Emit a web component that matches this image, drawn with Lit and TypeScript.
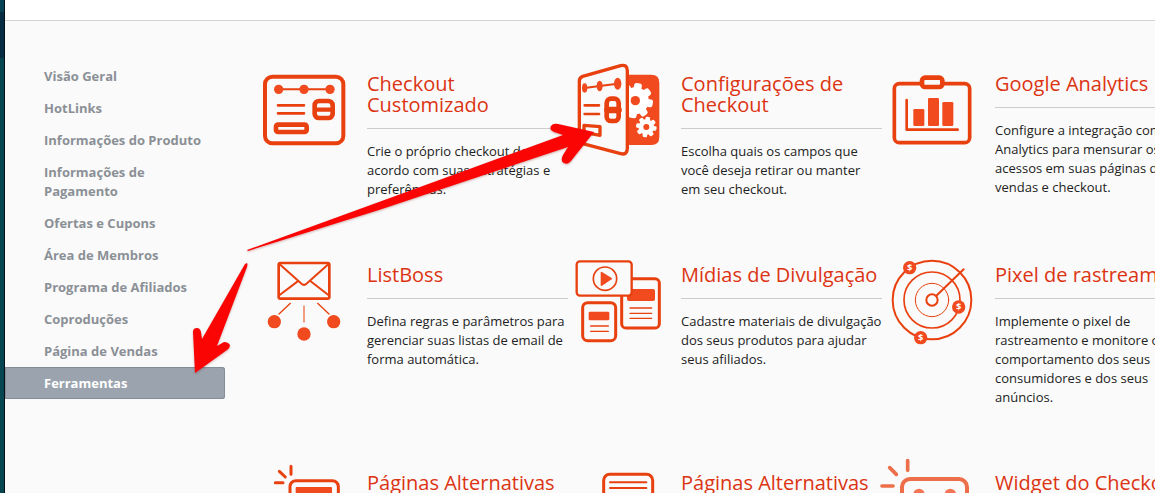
import { LitElement, html, css, svg } from "lit";
import { customElement, property } from "lit/decorators.js";

interface Tool {
  title: string;
  text: string;
  box: string;
  oneLine?: boolean;
  icon: unknown;
}

const gear = (cx: number, cy: number, r: number, hole: number) => svg`
  <g transform="translate(${cx} ${cy})">
    <circle r=${r * 0.76} fill="#fff"/>
    ${[0, 45, 90, 135, 180, 225, 270, 315].map(
      (a) => svg`<rect x=${-r * 0.22} y=${-r} width=${r * 0.44} height=${r * 0.6} rx=${r * 0.14} fill="#fff" transform="rotate(${a + 10})"/>`
    )}
    <circle r=${hole} fill="#f04a1e"/>
  </g>`;

const coin = (x: number, y: number) => svg`
  <circle cx=${x} cy=${y} r="20" fill="#f04a1e"/>
  <text class="coin" x=${x} y=${y + 10} text-anchor="middle">$</text>`;

const TOOLS: Tool[] = [
  {
    title: "Checkout Customizado",
    text: "Crie o próprio checkout de acordo com suas estratégias e preferências.",
    box: "12 0 300 300",
    icon: svg`
      <rect x="45" y="50" width="235" height="200" rx="22" stroke-width="12"/>
      <path d="M86 88H240" stroke-width="6"/>
      <g class="solid"><circle cx="86" cy="88" r="14"/><circle cx="162" cy="88" r="14"/><circle cx="240" cy="88" r="14"/></g>
      <path d="M84 136H162M84 160H162" stroke-width="8"/>
      <rect x="78" y="194" width="92" height="22" rx="6" stroke-width="14"/>
      <rect x="194" y="123" width="54" height="51" rx="13" stroke-width="14"/>
      <path d="M196 149H246" stroke-width="13"/>`,
  },
  {
    title: "Configurações de Checkout",
    text: "Escolha quais os campos que você deseja retirar ou manter em seu checkout.",
    box: "24 15 300 300",
    icon: svg`
      <path class="solid" d="M198 59H274Q298 59 298 83V246Q298 270 274 270H198Z"/>
      ${gear(226, 137, 53, 14)}
      ${gear(259, 216, 31, 9)}
      <path d="M58 78Q58 68 68 64L182 32Q202 27 202 48V280Q202 301 182 296L68 266Q58 263 58 252Z" fill="#fafafa" stroke-width="10"/>
      <path d="M74 99L119 93L173 86" stroke-width="6"/>
      <g class="solid"><ellipse cx="74" cy="99" rx="8" ry="14"/><ellipse cx="119" cy="93" rx="9" ry="16"/><ellipse cx="173" cy="86" rx="11" ry="18"/></g>
      <path d="M74 151H117M74 177H117" stroke-width="8"/>
      <rect x="140" y="131" width="36" height="67" rx="13" stroke-width="14"/>
      <path d="M142 165H176" stroke-width="19"/>
      <path d="M72 211L120 215V241L72 232Z" stroke-width="10"/>`,
  },
  {
    title: "Google Analytics",
    text: "Configure a integração com o Analytics para mensurar os acessos em suas páginas de vendas e checkout.",
    box: "6 0 300 300",
    icon: svg`
      <rect x="43" y="71" width="226" height="177" rx="15" stroke-width="11"/>
      <rect x="126" y="53" width="61" height="28" rx="9" fill="#fafafa" stroke-width="14"/>
      <path d="M80 120V209H233" stroke-width="8"/>
      <g class="solid"><rect x="100" y="147" width="33" height="51" rx="4"/><rect x="144" y="114" width="33" height="84" rx="4"/><rect x="187" y="126" width="33" height="72" rx="4"/></g>`,
  },
  {
    title: "ListBoss",
    text: "Defina regras e parâmetros para gerenciar suas listas de email de forma automática.",
    box: "-3 3 300 300",
    icon: svg`
      <rect x="71" y="39" width="152" height="107" rx="5" stroke-width="8"/>
      <path d="M74 43L138 100Q147 109 156 100L220 43M74 135L128 94M220 135L167 94" stroke-width="6"/>
      <path d="M106 160L72 192M188 160L222 192" stroke-width="4"/><path d="M147 168V216" stroke-width="3"/>
      <g class="solid"><circle cx="58" cy="215" r="20"/><circle cx="147" cy="252" r="20"/><circle cx="236" cy="215" r="20"/></g>`,
  },
  {
    title: "Mídias de Divulgação",
    text: "Cadastre materiais de divulgação dos seus produtos para ajudar seus afiliados.",
    box: "9 3 300 300",
    icon: svg`
      <rect x="170" y="86" width="113" height="148" rx="13" stroke-width="9"/>
      <rect class="solid" x="186" y="117" width="84" height="36" rx="6"/>
      <path d="M195 174H260M195 190H260M195 205H260" stroke-width="4"/>
      <rect x="35" y="34" width="165" height="103" rx="10" fill="#fafafa" stroke-width="7"/>
      <circle cx="120" cy="86" r="35" stroke-width="5"/>
      <path class="solid" d="M107 68Q107 64 111 66L140 84Q142 86 140 88L111 107Q107 109 107 105Z"/>
      <rect x="53" y="158" width="99" height="114" rx="15" stroke-width="9"/>
      <rect class="solid" x="71" y="185" width="62" height="26" rx="4"/>
      <path d="M77 228H130M77 244H130" stroke-width="4"/>`,
  },
  {
    title: "Pixel de rastreamento",
    oneLine: true,
    text: "Implemente o pixel de rastreamento e monitore o comportamento dos seus consumidores e dos seus anúncios.",
    box: "6 3 300 300",
    icon: svg`
      <circle cx="156" cy="150" r="118" stroke-width="6"/>
      <circle cx="156" cy="150" r="84" stroke-width="5"/>
      <circle cx="156" cy="150" r="50" stroke-width="3"/>
      <circle cx="156" cy="150" r="17" stroke-width="6"/>
      <path d="M169 137L251 58" stroke-width="6"/>
      ${coin(89, 53)}${coin(236, 171)}${coin(122, 263)}`,
  },
  {
    title: "Páginas Alternativas",
    text: "",
    box: "-18 27 300 300",
    icon: svg`
      <path d="M93 49V73M58 64L76 81M46 98H69" stroke-width="9"/>
      <rect x="90" y="92" width="145" height="160" rx="18" stroke-width="9"/>
      <rect class="solid" x="107" y="111" width="109" height="60" rx="3"/>`,
  },
  {
    title: "Páginas Alternativas",
    text: "",
    box: "-6 27 300 300",
    icon: svg`
      <rect x="101" y="73" width="147" height="160" rx="18" stroke-width="9"/>
      <path d="M120 97H229M120 114H229" stroke-width="6"/>`,
  },
  {
    title: "Widget do Checkout",
    text: "",
    box: "36 27 300 300",
    icon: svg`
      <g opacity=".75">
        <path d="M113 32V61M59 53L79 73M36 108H69" stroke-width="11"/>
        <rect x="96" y="87" width="195" height="150" rx="24" stroke-width="12"/>
        <g class="solid"><circle cx="147" cy="133" r="17"/><circle cx="241" cy="133" r="17"/></g>
      </g>`,
  },
];

const NAV = [
  "Visão Geral",
  "HotLinks",
  "Informações do Produto",
  "Informações de Pagamento",
  "Ofertas e Cupons",
  "Área de Membros",
  "Programa de Afiliados",
  "Coproduções",
  "Página de Vendas",
  "Ferramentas",
];

@customElement("tool-card")
class ToolCard extends LitElement {
  @property({ attribute: false }) tool!: Tool;

  static styles = css`
    :host {
      display: grid;
      grid-template-columns: 100px minmax(0, 1fr);
      column-gap: 13px;
      align-items: start;
    }
    .icon {
      display: block;
      width: 100px;
      height: 100px;
      overflow: visible;
      fill: none;
      stroke: #e8410f;
      stroke-linecap: round;
      stroke-linejoin: round;
    }
    .icon .solid {
      fill: #f04a1e;
      stroke: none;
    }
    .icon circle[fill],
    .icon rect[fill="#fff"] {
      stroke: none;
    }
    .coin {
      font: bold 28px "Open Sans", sans-serif;
      fill: #fff;
      stroke: none;
    }
    .body {
      padding: 13px 0 52px;
    }
    .title {
      margin: 0;
      padding-bottom: 13px;
      border-bottom: 1px solid #ccc;
      font-size: 20px;
      line-height: 21px;
      font-weight: 400;
    }
    .one-line {
      white-space: nowrap;
    }
    .link {
      color: #dc3412;
      text-decoration: none;
    }
    .text {
      margin: 13px 0 0;
      font-size: 13px;
      line-height: 19px;
      color: #222;
    }
  `;

  render() {
    return html`
      <svg class="icon" viewBox=${this.tool.box} aria-hidden="true">${this.tool.icon}</svg>
      <div class="body">
        <h3 class="title ${this.tool.oneLine ? "one-line" : ""}"><a class="link" href="#">${this.tool.title}</a></h3>
        <p class="text">${this.tool.text}</p>
      </div>
    `;
  }
}

@customElement("app-root")
class AppRoot extends LitElement {
  static styles = css`
    :host {
      display: flex;
      position: relative;
      height: 100vh;
      overflow: hidden;
      background: #fafafa;
      font-family: "Open Sans", sans-serif;
    }
    .edge {
      flex: none;
      box-sizing: border-box;
      width: 5px;
      border-right: 1px solid #011019;
      background: linear-gradient(#064455 0 12px, #082c42 12px 58px, #064650 58px);
    }
    .page {
      flex: 1;
      min-width: 0;
    }
    .top {
      height: 20px;
      background: #fff;
      border-bottom: 1px solid #d2d4d4;
    }
    .content {
      display: flex;
      align-items: flex-start;
      gap: 29px;
      padding-top: 39px;
    }
    .nav {
      flex: none;
      width: 220px;
    }
    .item {
      display: block;
      padding: 7px 20px 6px 39px;
      font-size: 13px;
      line-height: 19px;
      font-weight: 700;
      color: #8b9096;
      text-decoration: none;
    }
    .name {
      display: block;
      max-width: 160px;
    }
    .active {
      background: #9aa3ae;
      box-shadow: inset 0 0 0 1px #858d99;
      border-radius: 0 3px 3px 0;
      color: #fff;
    }
    .tools {
      flex: 1 0 942px;
      display: grid;
      grid-template-columns: repeat(3, minmax(314px, 1fr));
    }
    .arrows {
      position: absolute;
      top: 0;
      left: 0;
      width: 700px;
      height: 493px;
      pointer-events: none;
      fill: #fb0404;
      filter: drop-shadow(0 1px 1px rgba(120, 0, 0, 0.3));
    }
  `;

  render() {
    return html`
      <div class="edge"></div>
      <div class="page">
        <header class="top"></header>
        <div class="content">
          <nav class="nav" aria-label="Produto">
            ${NAV.map(
              (n) => html`<a class="item ${n === "Ferramentas" ? "active" : ""}" href="#"><span class="name">${n}</span></a>`
            )}
          </nav>
          <main class="tools">${TOOLS.map((t) => html`<tool-card .tool=${t}></tool-card>`)}</main>
        </div>
      </div>
      <svg class="arrows" viewBox="0 0 700 493" aria-hidden="true">
        <path d="M247 250L563 135L554 132Q549 130 551 126Q553 123 558 124L594 132L571 161Q568 165 564 163Q560 161 563 155L568 147L379 210L248 251Z" />
        <path d="M247 263Q248 264 247 267L217 346L224 342Q228 342 230 345Q230 348 227 350L195 373L193 332Q193 328 197 328Q200 328 201 332L202 339L245 264Z" />
      </svg>
    `;
  }
}
